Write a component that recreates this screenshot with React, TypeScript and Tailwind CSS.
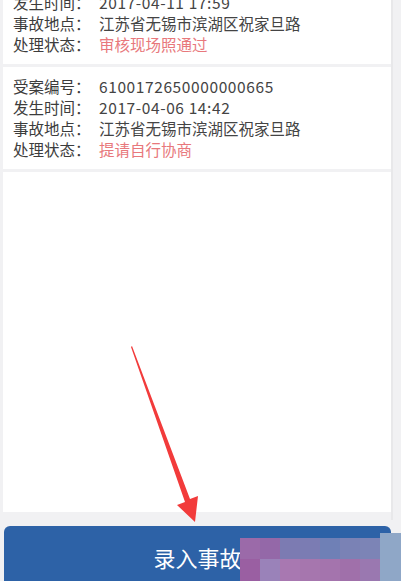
import React from "react";

type Row = { label: string; value: string; status?: boolean; digits?: boolean };

const cases: Row[][] = [
  [
    { label: "受案编号：", value: "6100172650000000664", digits: true },
    { label: "发生时间：", value: "2017-04-11 17:59", digits: true },
    { label: "事故地点：", value: "江苏省无锡市滨湖区祝家旦路" },
    { label: "处理状态：", value: "审核现场照通过", status: true },
  ],
  [
    { label: "受案编号：", value: "6100172650000000665", digits: true },
    { label: "发生时间：", value: "2017-04-06 14:42", digits: true },
    { label: "事故地点：", value: "江苏省无锡市滨湖区祝家旦路" },
    { label: "处理状态：", value: "提请自行协商", status: true },
  ],
];

const font = { fontFamily: '"Noto Sans CJK SC", "Noto Sans", sans-serif' };

function CaseCard({ rows, className }: { rows: Row[]; className?: string }) {
  return (
    <div className={`bg-white ml-[3px] mr-[10px] pt-[9px] pb-[9px] pl-[10px] ${className ?? ""}`}>
      {rows.map((r) => (
        <div key={r.label} className="flex h-[21px] items-center text-[15.5px] leading-[21px]">
          <span className="w-[86px] shrink-0 text-[#3c3c3c]">{r.label}</span>
          <span
            className={`${r.status ? "text-[#e8787c]" : "text-[#444444]"} ${r.digits ? "tracking-[0.6px]" : ""}`}
          >
            {r.value}
          </span>
        </div>
      ))}
    </div>
  );
}

// pixelated patch laid over the button's right end
const mosaicTop = ["#9b6aa9", "#9468a8", "#7c7bb2", "#7b7cb3", "#6f80b6", "#7a82b5", "#7c84b6"];
const mosaicBottom = ["#9a5fa2", "#9a82b9", "#a878b1", "#a676ae", "#a474ad", "#a070aa", "#9a78b0"];

export default function App() {
  return (
    <div className="relative h-[581px] w-[401px] overflow-hidden bg-[#f1f1f3]" style={font}>
      <div className="flex flex-col">
        <CaseCard rows={cases[0]} className="-mt-[38px]" />
        <CaseCard rows={cases[1]} className="mt-[3px]" />
        <div className="mt-[3px] ml-[3px] mr-[10px] h-[340px] bg-white" />
        <button className="mt-[14px] ml-[4px] mr-[10px] flex h-[64px] items-center justify-center rounded-[6px] bg-[#2d62a7] text-[22px] text-white">
          <span className="-mt-[1px]">录入事故</span>
        </button>
      </div>

      <div className="absolute top-0 right-[8px] h-[520px] w-[2px] bg-[#e8e8ea]" />

      <div className="absolute left-[240px] top-[538px] flex flex-col">
        <div className="flex">
          {mosaicTop.map((c, i) => (
            <div key={i} className="h-[21px] w-[20px]" style={{ backgroundColor: c }} />
          ))}
        </div>
        <div className="flex">
          {mosaicBottom.map((c, i) => (
            <div key={i} className="h-[22px] w-[20px]" style={{ backgroundColor: c }} />
          ))}
        </div>
      </div>
      <div className="absolute left-[380px] top-[533px] h-[48px] w-[21px] bg-[#8fa7c7]" />

      <svg className="absolute inset-0" width="401" height="581" viewBox="0 0 401 581">
        <polygon
          points="132,346 190,499 198,496 195,522 177,505 185,502 131,347"
          fill="#f23b3b"
        />
      </svg>
    </div>
  );
}
